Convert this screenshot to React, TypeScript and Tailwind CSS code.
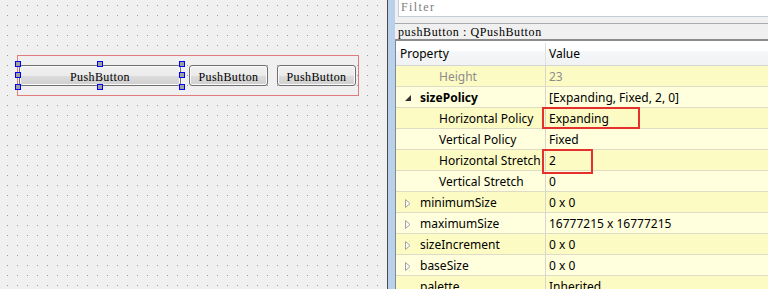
import React from 'react';

type Row = {
  name: string;
  value: string;
  level: 1 | 2;
  tone: 'dark' | 'light';
  indicator?: 'open' | 'closed';
  bold?: boolean;
  muted?: boolean;
};

const rows: Row[] = [
  { name: 'Height', value: '23', level: 2, tone: 'dark', muted: true },
  { name: 'sizePolicy', value: '[Expanding, Fixed, 2, 0]', level: 1, tone: 'light', indicator: 'open', bold: true },
  { name: 'Horizontal Policy', value: 'Expanding', level: 2, tone: 'dark' },
  { name: 'Vertical Policy', value: 'Fixed', level: 2, tone: 'light' },
  { name: 'Horizontal Stretch', value: '2', level: 2, tone: 'dark' },
  { name: 'Vertical Stretch', value: '0', level: 2, tone: 'light' },
  { name: 'minimumSize', value: '0 x 0', level: 1, tone: 'dark', indicator: 'closed' },
  { name: 'maximumSize', value: '16777215 x 16777215', level: 1, tone: 'light', indicator: 'closed' },
  { name: 'sizeIncrement', value: '0 x 0', level: 1, tone: 'dark', indicator: 'closed' },
  { name: 'baseSize', value: '0 x 0', level: 1, tone: 'light', indicator: 'closed' },
  { name: 'palette', value: 'Inherited', level: 1, tone: 'dark' },
];

const Handle = ({ className }: { className: string }) => (
  <div className={`absolute h-[6px] w-[6px] border border-[#0000ff] bg-[#a0a0a0] ${className}`} />
);

const PushButton = () => (
  <div className="m-px flex h-[21px] items-center justify-center rounded-[3px] border border-[#707070] bg-[linear-gradient(#f2f2f2_0%,#ebebeb_50%,#dddddd_50%,#cfcfcf_100%)] pt-[2px] shadow-[inset_0_0_0_1px_#fbfbfb] font-['Liberation_Serif',serif] text-[12px] tracking-[0.4px] text-black">
    PushButton
  </div>
);

const FormCanvas = () => (
  <div className="relative h-full w-[388px] shrink-0 border-r border-[#4a4a4a] bg-[#f0f0f0] pl-[17px] pt-[55px]">
    {/* designer grid */}
    <svg className="absolute inset-0" width="387" height="289">
      <defs>
        <pattern id="dots" width="10" height="10" patternUnits="userSpaceOnUse">
          <rect x="7" y="5" width="1" height="1" fill="#9a9a9a" />
        </pattern>
      </defs>
      <rect width="387" height="289" fill="url(#dots)" />
    </svg>

    <div className="relative flex h-[41px] w-[342px] items-center border border-[#e07c7c]">
      <div className="relative h-[23px] w-[164px]">
        <PushButton />
        <Handle className="-left-[3px] -top-[3px]" />
        <Handle className="left-[79px] -top-[3px]" />
        <Handle className="-right-[3px] -top-[3px]" />
        <Handle className="-left-[3px] top-[8px]" />
        <Handle className="-right-[3px] top-[8px]" />
        <Handle className="-left-[3px] -bottom-[3px]" />
        <Handle className="left-[79px] -bottom-[3px]" />
        <Handle className="-right-[3px] -bottom-[3px]" />
      </div>
      <div className="ml-[6px] h-[23px] w-[81px]">
        <PushButton />
      </div>
      <div className="ml-[7px] h-[23px] w-[81px]">
        <PushButton />
      </div>
    </div>
  </div>
);

const PropertyRow = ({ row }: { row: Row }) => (
  <div
    className={`flex h-[21px] shrink-0 items-center border-b border-[#dedcc4] ${
      row.tone === 'dark' ? 'bg-[#fdfbc4]' : 'bg-[#ffffdd]'
    }`}
  >
    <div
      className={`relative flex h-full w-[150px] shrink-0 items-center overflow-hidden whitespace-nowrap border-r border-[#d6d6cc] pt-[2px] ${
        row.level === 1 ? 'pl-[24px]' : 'pl-[43px]'
      } ${row.bold ? 'font-bold' : ''} ${row.muted ? 'text-[#8d8d8d]' : 'text-black'}`}
    >
      {row.indicator === 'open' && (
        <svg className="absolute left-[9px] top-[8px]" width="6" height="6" viewBox="0 0 6 6">
          <polygon points="6,0 6,6 0,6" fill="#333333" />
        </svg>
      )}
      {row.indicator === 'closed' && (
        <svg className="absolute left-[9px] top-[7px]" width="6" height="9" viewBox="0 0 6 9">
          <polygon points="0.5,0.5 5,4.5 0.5,8.5" fill="#fbfbfb" stroke="#a2a2a2" strokeWidth="1" />
        </svg>
      )}
      {row.name}
    </div>
    <div className={`whitespace-nowrap pl-[3px] pt-[2px] ${row.muted ? 'text-[#8d8d8d]' : 'text-black'}`}>
      {row.value}
    </div>
  </div>
);

const PropertyPanel = () => (
  <div className="flex h-full min-w-[373px] flex-col bg-[#f0f0f0]">
    <div className="ml-[3px] h-[17px] shrink-0 border-b border-l border-[#c6ccd6] bg-white pl-[2px] font-['Liberation_Serif',serif] text-[12px] leading-[15px] tracking-[1.4px] text-[#7d7d7d]">
      Filter
    </div>
    <div className="mt-[6px] h-[18px] shrink-0 border-b-2 border-t border-b-[#8c8c8c] border-t-[#aaaaaa] pl-[3px] font-['Liberation_Serif',serif] text-[12px] leading-[16px] tracking-[0.6px] text-black">
      pushButton : QPushButton
    </div>
    <div className="flex flex-1 flex-col border-l border-[#828790] bg-white">
      <div className="flex h-[25px] shrink-0 items-center border-b border-[#d5d5d5] bg-[linear-gradient(#ffffff_0%,#ffffff_40%,#f6f7f8_40%,#f1f2f4_100%)] pt-[2px] text-black">
        <div className="flex h-full w-[150px] shrink-0 items-center border-r border-[#e0e0e0] pl-[4px]">Property</div>
        <div className="pl-[3px]">Value</div>
      </div>
      {rows.map((row) => (
        <PropertyRow key={row.name} row={row} />
      ))}
    </div>
  </div>
);

export default function App() {
  return (
    <div className="relative flex h-[289px] w-[768px] overflow-hidden bg-[#f0f0f0] font-['Noto_Sans',sans-serif] text-[12px]">
      <FormCanvas />
      <div className="h-full w-[7px] shrink-0 bg-[#b9d1ea]" />
      <PropertyPanel />
      {/* red annotation boxes */}
      <div className="absolute left-[542px] top-[107px] h-[22px] w-[98px] border-2 border-[#e5312e]" />
      <div className="absolute left-[542px] top-[149px] h-[25px] w-[51px] border-2 border-[#e5312e]" />
    </div>
  );
}
